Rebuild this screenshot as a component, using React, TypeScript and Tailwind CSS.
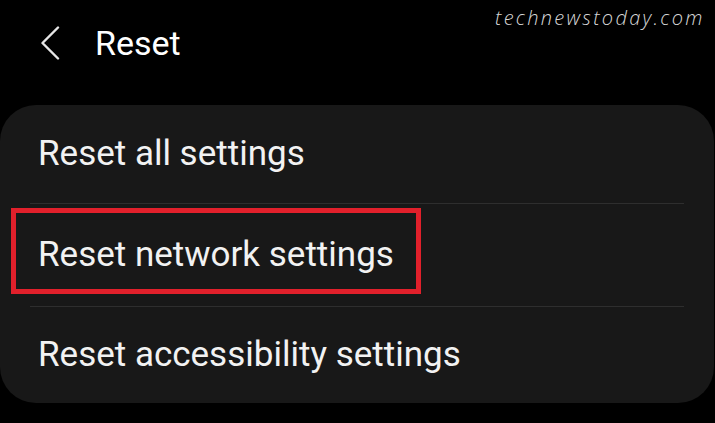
import React from 'react';

const items = ['Reset all settings', 'Reset network settings', 'Reset accessibility settings'];

const App: React.FC = () => {
  return (
    <div className="relative w-[715px] h-[423px] bg-black overflow-hidden font-['Roboto',sans-serif]">
      <div className="absolute top-[4px] left-[495px] text-[20px] leading-[28px] italic font-light tracking-[2.3px] text-[#d6d6d6] font-['Open_Sans',sans-serif]">
        technewstoday.com
      </div>

      <div className="flex items-center h-[86px] pl-[40px]">
        <svg width="20" height="34" viewBox="0 0 20 34" fill="none" className="shrink-0">
          <path d="M18 1.5 L2.5 17 L18 32.5" stroke="#e6e6e6" strokeWidth="2.4" strokeLinecap="round" strokeLinejoin="round" />
        </svg>
        <span className="ml-[35px] text-[34px] leading-[40px] text-white">Reset</span>
      </div>

      <div className="mt-[19px] w-[714px] h-[298px] rounded-[36px] bg-[#181818] flex flex-col">
        <div className="h-[98px] flex items-center pl-[38px] text-[35px] leading-[40px] text-[#f2f2f2]">
          {items[0]}
        </div>
        <div className="mx-[30px] h-px bg-[#2e2e2e]" />
        <div className="relative h-[102px] flex items-center pl-[38px] text-[35px] leading-[40px] text-[#f2f2f2]">
          <div className="absolute left-[11px] top-[4px] w-[410px] h-[86px] border-[5px] border-[#e1202b]" />
          {items[1]}
        </div>
        <div className="mx-[30px] h-px bg-[#2e2e2e]" />
        <div className="h-[96px] flex items-center pl-[38px] text-[35px] leading-[40px] text-[#f2f2f2]">
          {items[2]}
        </div>
      </div>
    </div>
  );
};

export default App;
